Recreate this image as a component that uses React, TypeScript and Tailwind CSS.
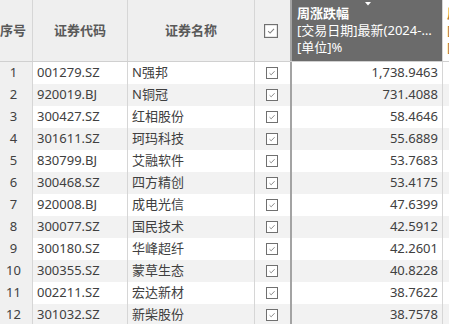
import React from "react";

const rows = [
  { code: "001279.SZ", name: "N强邦", pct: "1,738.9463" },
  { code: "920019.BJ", name: "N铜冠", pct: "731.4088" },
  { code: "300427.SZ", name: "红相股份", pct: "58.4646" },
  { code: "301611.SZ", name: "珂玛科技", pct: "55.6889" },
  { code: "830799.BJ", name: "艾融软件", pct: "53.7683" },
  { code: "300468.SZ", name: "四方精创", pct: "53.4175" },
  { code: "920008.BJ", name: "成电光信", pct: "47.6399" },
  { code: "300077.SZ", name: "国民技术", pct: "42.5912" },
  { code: "300180.SZ", name: "华峰超纤", pct: "42.2601" },
  { code: "300355.SZ", name: "蒙草生态", pct: "40.8228" },
  { code: "002211.SZ", name: "宏达新材", pct: "38.7622" },
  { code: "301032.SZ", name: "新柴股份", pct: "38.7578" },
];

function CheckBox({ size = 12 }: { size?: number }) {
  return (
    <svg width={size} height={size} viewBox="0 0 12 12">
      <rect x="0.5" y="0.5" width="11" height="11" fill="white" stroke="#707070" />
      <path d="M3.5 6.2 L5.2 7.8 L8.6 4.2" fill="none" stroke="#808080" strokeWidth="0.9" />
    </svg>
  );
}

export default function App() {
  return (
    <div
      className="w-[449px] h-[324px] overflow-hidden bg-white text-[13px] text-[#404040]"
      style={{ fontFamily: '"Noto Sans", "Noto Sans CJK SC", sans-serif' }}
    >
      {/* header */}
      <div className="flex h-[62px] border-b border-[#d0d0d0] bg-[#efefef] font-bold text-[#595959]">
        <div className="w-[33px] shrink-0 border-r border-[#d6d6d6] flex items-center justify-center">
          <span className="-ml-[6px] whitespace-nowrap">序号</span>
        </div>
        <div className="w-[95px] shrink-0 border-r border-[#d6d6d6] flex items-center justify-center">证券代码</div>
        <div className="w-[127px] shrink-0 border-r border-[#d6d6d6] flex items-center justify-center">证券名称</div>
        <div className="w-[37px] shrink-0 border-r-2 border-[#a3a3a3] flex items-center justify-center pr-[4px]">
          <CheckBox size={14} />
        </div>
        <div className="relative w-[151px] shrink-0 border-r border-[#d6d6d6] bg-[#6b6b6b] text-white pl-[5px] pr-[4px] pt-[5px] leading-[17px]">
          <svg className="absolute left-[73px] top-[2px]" width="6" height="4" viewBox="0 0 6 4">
            <path d="M0 0 H6 L3 3.5 Z" fill="white" />
          </svg>
          <div className="whitespace-nowrap">周涨跌幅</div>
          <div className="whitespace-nowrap overflow-hidden text-ellipsis font-normal">[交易日期]最新(2024-12-20)</div>
          <div className="whitespace-nowrap font-normal">[单位]%</div>
        </div>
        <div className="flex-1 overflow-hidden bg-white pl-[4px] pt-[5px] leading-[17px] text-[#b07a30]">
          <div className="whitespace-nowrap">周</div>
          <div className="whitespace-nowrap font-normal">[</div>
          <div className="whitespace-nowrap font-normal">[</div>
        </div>
      </div>

      {/* body */}
      {rows.map((r, i) => (
        <div key={r.code} className={`flex h-[22px] items-center ${i % 2 === 1 ? "bg-[#f2f2f2]" : "bg-white"}`}>
          <div className="w-[33px] h-full shrink-0 border-r border-[#d6d6d6] bg-[#f0f0f0] flex items-center justify-center pr-[5px]">
            {i + 1}
          </div>
          <div className="w-[95px] h-full shrink-0 border-r border-[#d6d6d6] flex items-center pl-[4px]">{r.code}</div>
          <div className="w-[127px] h-full shrink-0 border-r border-[#d6d6d6] flex items-center pl-[4px]">{r.name}</div>
          <div className="w-[37px] h-full shrink-0 border-r-2 border-[#a3a3a3] flex items-center justify-center pr-[2px]">
            <CheckBox />
          </div>
          <div className="w-[151px] h-full shrink-0 border-r border-[#d6d6d6] flex items-center justify-end pr-[4px]">
            {r.pct}
          </div>
          <div className="flex-1 h-full" />
        </div>
      ))}
    </div>
  );
}
